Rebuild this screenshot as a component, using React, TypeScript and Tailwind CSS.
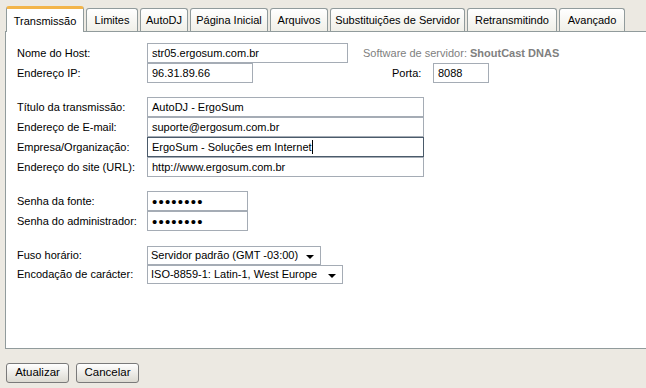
import React from "react";

const tabs: [string, string][] = [
	["Transmissão", "w-[78px]"],
	["Limites", "w-[52px]"],
	["AutoDJ", "w-[48px]"],
	["Página Inicial", "w-[78px]"],
	["Arquivos", "w-[58px]"],
	["Substituições de Servidor", "w-[135px]"],
	["Retransmitindo", "w-[90px]"],
	["Avançado", "w-[66px]"],
];

const Field = ({
	value,
	width,
	focused,
	password,
}: {
	value: string;
	width: string;
	focused?: boolean;
	password?: boolean;
}) => (
	<div
		className={`h-[20px] ${width} border ${
			focused ? "border-[#4a5a6a]" : "border-[#a5acb5]"
		} bg-white flex items-center px-[4px]`}
	>
		{password ? (
			<span className="whitespace-nowrap text-[15px] leading-none tracking-[1.2px]">
				{value}
			</span>
		) : (
			<span className="whitespace-nowrap">{value}</span>
		)}
		{focused && <span className="w-px h-[14px] bg-black" />}
	</div>
);

const Select = ({ value, width }: { value: string; width: string }) => (
	<div
		className={`h-[19px] ${width} border border-[#a5acb5] bg-white flex items-center justify-between pl-[3px] pr-[6px]`}
	>
		<span className="whitespace-nowrap">{value}</span>
		<span className="w-0 h-0 border-l-[4px] border-r-[4px] border-t-[4px] border-l-transparent border-r-transparent border-t-black mt-[2px]" />
	</div>
);

const Row = ({ label, children }: { label: string; children: React.ReactNode }) => (
	<div className="flex items-center">
		<span className="w-[130px] shrink-0">{label}</span>
		{children}
	</div>
);

export default function App() {
	return (
		<div
			className="w-[646px] h-[388px] bg-[#ece9e2] text-[11px] text-black overflow-hidden"
			style={{ fontFamily: '"Liberation Sans", Arial, sans-serif' }}
		>
			{/* tabs */}
			<div className="flex items-end gap-[2px] pl-[6px] pt-[6px] h-[32px] relative z-10">
				{tabs.map(([t, w], i) =>
					i === 0 ? (
						<div
							key={t}
							className={`${w} shrink-0 whitespace-nowrap h-[26px] flex items-center justify-center bg-white border border-[#919b9c] border-b-0 rounded-t-[3px] border-t-[3px] border-t-[#f3b54a] pt-[1px]`}
						>
							{t}
						</div>
					) : (
						<div
							key={t}
							className={`${w} shrink-0 whitespace-nowrap h-[23px] mb-px flex items-center justify-center bg-gradient-to-b from-white to-[#f0efe8] border border-[#919b9c] border-b-0 rounded-t-[3px]`}
						>
							{t}
						</div>
					)
				)}
			</div>

			{/* panel */}
			<div className="ml-[5px] -mt-px h-[318px] bg-white border border-r-0 border-[#919b9c] pl-[11px] pt-[11px] flex flex-col">
				<div className="flex flex-col">
					<Row label="Nome do Host:">
						<Field value="str05.ergosum.com.br" width="w-[201px]" />
						<span className="ml-[15px] text-[#808080]">
							Software de servidor: <b>ShoutCast DNAS</b>
						</span>
					</Row>
					<Row label="Endereço IP:">
						<Field value="96.31.89.66" width="w-[106px]" />
						<span className="ml-[139px] w-[41px]">Porta:</span>
						<Field value="8088" width="w-[56px]" />
					</Row>
				</div>

				<div className="flex flex-col mt-[14px]">
					<Row label="Título da transmissão:">
						<Field value="AutoDJ - ErgoSum" width="w-[277px]" />
					</Row>
					<Row label="Endereço de E-mail:">
						<Field value="suporte@ergosum.com.br" width="w-[277px]" />
					</Row>
					<Row label="Empresa/Organização:">
						<Field value="ErgoSum - Soluções em Internet" width="w-[277px]" focused />
					</Row>
					<Row label="Endereço do site (URL):">
						<Field value="http://www.ergosum.com.br" width="w-[277px]" />
					</Row>
				</div>

				<div className="flex flex-col mt-[14px]">
					<Row label="Senha da fonte:">
						<Field value="••••••••" width="w-[101px]" password />
					</Row>
					<Row label="Senha do administrador:">
						<Field value="••••••••" width="w-[101px]" password />
					</Row>
				</div>

				<div className="flex flex-col mt-[15px]">
					<Row label="Fuso horário:">
						<Select value="Servidor padrão (GMT -03:00)" width="w-[174px]" />
					</Row>
					<Row label="Encodação de carácter:">
						<Select value="ISO-8859-1: Latin-1, West Europe" width="w-[196px]" />
					</Row>
				</div>
			</div>

			{/* buttons */}
			<div className="flex gap-[7px] pl-[6px] mt-[14px]">
				{["Atualizar", "Cancelar"].map((b) => (
					<button
						key={b}
						className="h-[20px] w-[63px] rounded-[3px] border border-[#7a7a7a] bg-gradient-to-b from-white to-[#dcdad2] text-[11.5px]"
					>
						{b}
					</button>
				))}
			</div>
		</div>
	);
}
